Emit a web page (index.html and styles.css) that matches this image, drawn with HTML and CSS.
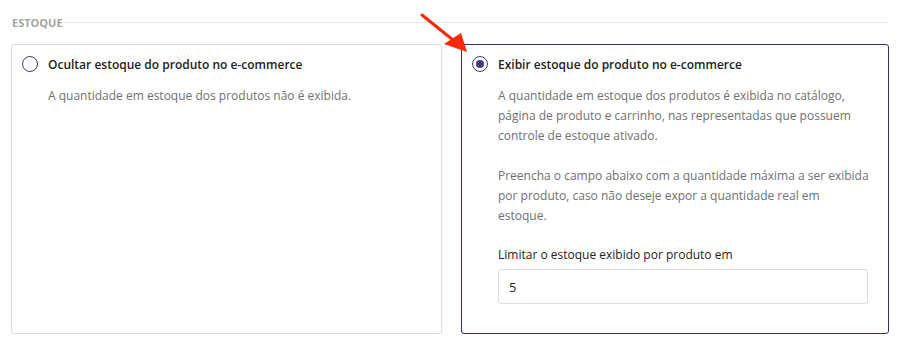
FILE: index.html
```html
<!DOCTYPE html>
<html lang="pt-BR">

<head>
    <meta charset="UTF-8">
    <meta name="viewport" content="width=device-width, initial-scale=1.0">
    <title>Estoque</title>
    <link rel="stylesheet" href="styles.css">
</head>

<body>
    <div class="section">
        <div class="section-title">
            <span>Estoque</span>
        </div>

        <div class="options">
            <label class="option">
                <div class="option-head">
                    <input type="radio" name="estoque" value="ocultar">
                    <span class="option-title">Ocultar estoque do produto no e-commerce</span>
                </div>
                <div class="option-body">
                    <p>A quantidade em estoque dos produtos não é exibida.</p>
                </div>
            </label>

            <label class="option selected">
                <div class="option-head">
                    <input type="radio" name="estoque" value="exibir" checked>
                    <span class="option-title">Exibir estoque do produto no e-commerce</span>
                </div>
                <div class="option-body">
                    <p>A quantidade em estoque dos produtos é exibida no catálogo, página de produto e carrinho, nas representadas que possuem controle de estoque ativado.</p>
                    <p>Preencha o campo abaixo com a quantidade máxima a ser exibida por produto, caso não deseje expor a quantidade real em estoque.</p>
                    <div class="field-label">Limitar o estoque exibido por produto em</div>
                    <input class="field-input" type="text" value="5">
                </div>
            </label>
        </div>

        <!-- seta de destaque -->
        <svg class="arrow" width="60" height="50" viewBox="0 0 60 50">
            <line x1="2" y1="2" x2="38" y2="31" stroke="#f4290e" stroke-width="3" stroke-linecap="round" />
            <polygon points="24,31 41,20 47,39" fill="#f4290e" />
        </svg>
    </div>
</body>

</html>
```

FILE: styles.css
```css
body {
    margin: 0;
    font-family: "Open Sans", Arial, sans-serif;
    font-size: 12px;
    color: #222;
    background-color: #fff;
}

.section {
    position: relative;
    padding: 15px 20px 20px 11px;
}

.section-title {
    display: flex;
    align-items: center;
    gap: 2px;
    margin-bottom: 14px;
    padding-left: 1px;
    font-size: 11px;
    font-weight: 700;
    text-transform: uppercase;
    color: #a3a3a3;
}

.section-title::after {
    content: "";
    flex: 1;
    height: 1px;
    margin-top: -1px;
    background-color: #e8e8e8;
}

.options {
    display: grid;
    grid-template-columns: 431px 1fr;
    gap: 19px;
}

.option {
    display: block;
    height: 290px;
    box-sizing: border-box;
    padding: 9px 20px 20px 10px;
    border: 1px solid #dcdcdc;
    border-radius: 3px;
    cursor: pointer;
}

.option.selected {
    border-color: #3b2e66;
}

.option-head {
    display: flex;
    align-items: center;
    gap: 10px;
    height: 20px;
}

.option-head input {
    appearance: none;
    width: 16px;
    height: 16px;
    margin: 0;
    border: 1.5px solid #4b3b80;
    border-radius: 50%;
    box-sizing: border-box;
    display: grid;
    place-items: center;
}

.option-head input:checked::before {
    content: "";
    width: 8px;
    height: 8px;
    border-radius: 50%;
    background-color: #4b3b80;
}

.option-title {
    font-weight: 600;
    color: #222;
}

.option-body {
    padding-left: 26px;
    padding-top: 12px;
    color: #707070;
    line-height: 20px;
}

.option-body p {
    margin: 0 -3px 20px 0;
}

.field-label {
    color: #222;
    line-height: 18px;
    margin-bottom: 5px;
}

.field-input {
    display: block;
    width: 100%;
    height: 35px;
    box-sizing: border-box;
    padding: 0 10px;
    border: 1px solid #ddd;
    border-radius: 3px;
    font-family: inherit;
    font-size: 13px;
    color: #222;
    outline: none;
}

.arrow {
    position: absolute;
    left: 420px;
    top: 13px;
}
```
